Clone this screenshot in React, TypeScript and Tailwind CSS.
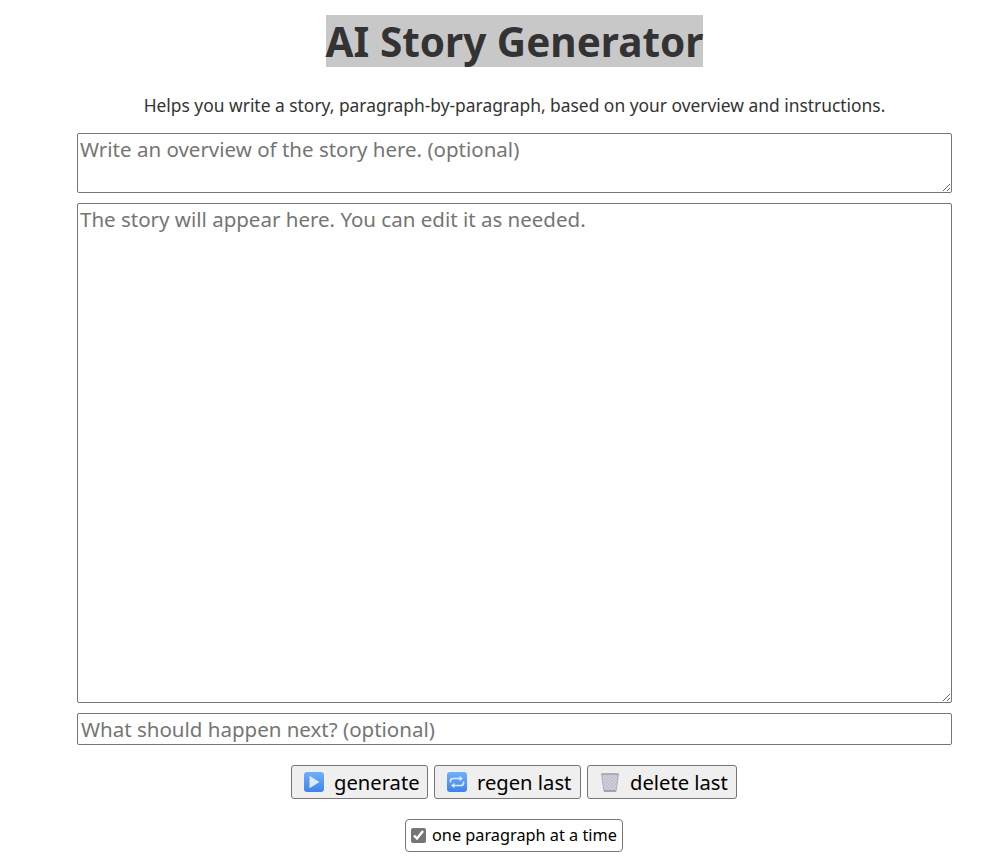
import React, { useState } from 'react';

const PlayIcon = () => (
  <svg width="20" height="20" viewBox="0 0 20 20" className="shrink-0">
    <defs>
      <linearGradient id="blue1" x1="0" y1="0" x2="0" y2="1">
        <stop offset="0" stopColor="#6fb0fa" />
        <stop offset="1" stopColor="#3f83ea" />
      </linearGradient>
    </defs>
    <rect width="20" height="20" rx="3" fill="url(#blue1)" />
    <path d="M5.5 3.8 L15.5 10 L5.5 16.2 Z" fill="#dceafd" />
  </svg>
);

const RepeatIcon = () => (
  <svg width="20" height="20" viewBox="0 0 20 20" className="shrink-0">
    <defs>
      <linearGradient id="blue2" x1="0" y1="0" x2="0" y2="1">
        <stop offset="0" stopColor="#6fb0fa" />
        <stop offset="1" stopColor="#3f83ea" />
      </linearGradient>
    </defs>
    <rect width="20" height="20" rx="3" fill="url(#blue2)" />
    <path d="M3.5 10.5 V9 Q3.5 6.5 6 6.5 H14" fill="none" stroke="#dceafd" strokeWidth="1.7" />
    <path d="M12.5 3.8 L16 6.5 L12.5 9.2 Z" fill="#dceafd" />
    <path d="M16.5 9.5 V11 Q16.5 13.5 14 13.5 H6" fill="none" stroke="#dceafd" strokeWidth="1.7" />
    <path d="M7.5 10.8 L4 13.5 L7.5 16.2 Z" fill="#dceafd" />
  </svg>
);

const TrashIcon = () => (
  <svg width="20" height="20" viewBox="0 0 20 20" className="shrink-0">
    <defs>
      <pattern id="mesh" width="2.4" height="2.4" patternUnits="userSpaceOnUse" patternTransform="rotate(45)">
        <rect width="2.4" height="2.4" fill="#d6d4de" />
        <path d="M0 0 H2.4 M0 0 V2.4" stroke="#a5a2b4" strokeWidth="0.7" />
      </pattern>
    </defs>
    <path d="M1.5 2 H18.5 L16 19.5 H4 Z" fill="url(#mesh)" stroke="#aeabbc" strokeWidth="1" />
    <path d="M1.5 2 H18.5" stroke="#a9a6b8" strokeWidth="1.6" />
    <path d="M4 18.8 H16" stroke="#9c99ad" strokeWidth="1.4" />
  </svg>
);

const ActionButton = ({ icon, label, width }: { icon: React.ReactNode; label: string; width: string }) => (
  <button
    type="button"
    className={`flex h-[34px] items-center gap-[10px] rounded-[3px] border border-[#767676] bg-[#efefef] pl-[12px] text-[20.2px] text-black ${width}`}
  >
    {icon}
    <span>{label}</span>
  </button>
);

export default function App() {
  const [oneParagraph, setOneParagraph] = useState(true);

  return (
    <div className="min-h-[867px] bg-white font-['Noto_Sans','Open_Sans',sans-serif] text-[#333333]">
      <div className="ml-[77px] flex w-[875px] flex-col items-center">
        <h1 className="mt-[15px] bg-[#c8c8c8] pt-[1px] text-[40.5px] font-bold leading-[51px]">AI Story Generator</h1>

        <p className="mt-[26px] text-[17.4px] leading-[24px]">
          Helps you write a story, paragraph-by-paragraph, based on your overview and instructions.
        </p>

        <textarea
          placeholder="Write an overview of the story here. (optional)"
          className="mt-[16px] block h-[60px] w-full resize-y rounded-[2px] border border-[#767676] p-[2px] text-[20.5px] leading-[27px] outline-none placeholder:text-[#757575]"
        />
        <textarea
          placeholder="The story will appear here. You can edit it as needed."
          className="mt-[10px] block h-[500px] w-full resize-y rounded-[2px] border border-[#767676] p-[2px] text-[20.5px] leading-[27px] outline-none placeholder:text-[#757575]"
        />
        <input
          type="text"
          placeholder="What should happen next? (optional)"
          className="mt-[10px] block h-[32px] w-full rounded-[2px] border border-[#767676] px-[3px] text-[20.5px] outline-none placeholder:text-[#757575]"
        />

        <div className="mt-[20px] -ml-[1px] flex gap-[6px]">
          <ActionButton icon={<PlayIcon />} label="generate" width="w-[137px]" />
          <ActionButton icon={<RepeatIcon />} label="regen last" width="w-[147px]" />
          <ActionButton icon={<TrashIcon />} label="delete last" width="w-[150px]" />
        </div>

        <label className="mt-[20px] -ml-[1px] flex h-[33px] w-[218px] items-center gap-[6px] rounded-[4px] border border-[#767676] pl-[5px] text-[16.3px] text-black">
          <input
            type="checkbox"
            checked={oneParagraph}
            onChange={(e) => setOneParagraph(e.target.checked)}
            className="m-0 h-[15px] w-[15px] accent-[#757575]"
          />
          one paragraph at a time
        </label>
      </div>
    </div>
  );
}
